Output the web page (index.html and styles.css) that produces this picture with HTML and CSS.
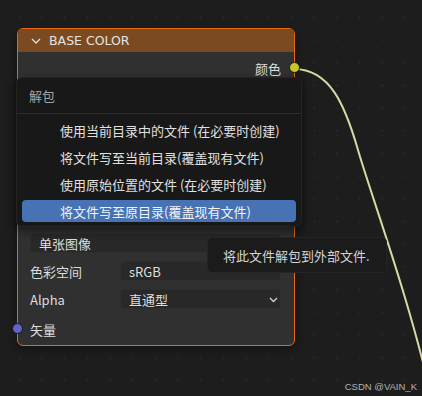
FILE: index.html
```html
<!DOCTYPE html>
<html lang="zh">
<head>
    <meta charset="UTF-8">
    <meta name="viewport" content="width=device-width, initial-scale=1.0">
    <title>Base Color</title>
    <link rel="stylesheet" href="styles.css">
</head>
<body>
    <div class="canvas">
        <svg class="wire" width="422" height="396" viewBox="0 0 422 396">
            <path d="M294 69 C 330 69, 345 105, 358 150 S 410 300, 432 400" fill="none" stroke="#d8d8a4" stroke-width="2"/>
        </svg>

        <div class="node">
            <div class="node-header">
                <svg class="chevron" width="10" height="6" viewBox="0 0 10 6">
                    <path d="M1 1 L5 5 L9 1" fill="none" stroke="#dcdcdc" stroke-width="1.3"/>
                </svg>
                BASE COLOR
            </div>
            <div class="output-row">颜色<span class="socket socket-color"></span></div>
            <div class="hidden-rows"></div>
            <div class="props">
                <div class="field wide">单张图像</div>
                <div class="prop-row">
                    <span class="label">色彩空间</span>
                    <div class="field">sRGB</div>
                </div>
                <div class="prop-row">
                    <span class="label">Alpha</span>
                    <div class="field">直通型
                        <svg class="drop" width="9" height="6" viewBox="0 0 9 6">
                            <path d="M1 1 L4.5 4.5 L8 1" fill="none" stroke="#cfcfcf" stroke-width="1.4"/>
                        </svg>
                    </div>
                </div>
                <div class="prop-row input-row">
                    <span class="socket socket-vector"></span>
                    <span class="label">矢量</span>
                </div>
            </div>
        </div>

        <div class="menu">
            <div class="menu-title">解包</div>
            <div class="menu-items">
                <div class="menu-item">使用当前目录中的文件 (在必要时创建)</div>
                <div class="menu-item">将文件写至当前目录(覆盖现有文件)</div>
                <div class="menu-item">使用原始位置的文件 (在必要时创建)</div>
                <div class="menu-item active">将文件写至原目录(覆盖现有文件)</div>
            </div>
        </div>

        <div class="tooltip">将此文件解包到外部文件.</div>

        <div class="watermark">CSDN @VAIN_K</div>
    </div>
</body>
</html>
```

FILE: styles.css
```css
body {
    margin: 0;
    padding: 0;
    background: #1d1d1d;
    font-family: "DejaVu Sans", "Noto Sans CJK SC", sans-serif;
    color: #e2e2e2;
}
.canvas {
    position: relative;
    width: 422px;
    height: 396px;
    overflow: hidden;
    background-color: #1d1d1d;
    background-image: radial-gradient(circle, #262626 1px, transparent 1.3px);
    background-size: 22.7px 22.7px;
    background-position: 8px 6px;
}
.wire {
    position: absolute;
    left: 0;
    top: 0;
}
.node {
    position: absolute;
    left: 17px;
    top: 28px;
    width: 278px;
    height: 318px;
    box-sizing: border-box;
    border: 1px solid #ea6610;
    border-radius: 6px;
    background: #303030;
    box-shadow: 0 3px 8px rgba(0, 0, 0, 0.4);
}
.node-header {
    height: 23px;
    display: flex;
    align-items: center;
    padding-left: 13px;
    background: #7b4a20;
    border-radius: 5px 5px 0 0;
    font-size: 12.5px;
    color: #e4e4e4;
}
.chevron {
    margin-right: 8px;
}
.output-row {
    position: relative;
    height: 32px;
    display: flex;
    align-items: center;
    justify-content: flex-end;
    padding-right: 13px;
    font-size: 13px;
    font-family: "Noto Sans CJK SC", sans-serif;
    color: #dcdcdc;
}
.socket {
    position: absolute;
    width: 9px;
    height: 9px;
    border-radius: 50%;
    border: 1px solid #151515;
}
.socket-color {
    right: -6px;
    top: 10px;
    background: #c7c729;
}
.socket-vector {
    left: -6px;
    top: 6px;
    background: #6363c7;
}
.hidden-rows {
    height: 149px;
}
.props {
    display: flex;
    flex-direction: column;
    gap: 8px;
    padding: 0 13px 0 12px;
    font-family: "Noto Sans CJK SC", sans-serif;
    font-size: 13px;
}
.prop-row {
    position: relative;
    display: flex;
    align-items: center;
    height: 20px;
}
.input-row {
    height: 24px;
    margin-left: -12px;
    padding-left: 12px;
}
.label {
    width: 90px;
    color: #dcdcdc;
}
.field {
    flex: 1;
    height: 20px;
    box-sizing: border-box;
    display: flex;
    align-items: center;
    padding-left: 8px;
    background: #282828;
    border: 1px solid #2e2e2e;
    border-radius: 4px;
    color: #dedede;
    position: relative;
}
.field.wide {
    flex: none;
}
.drop {
    position: absolute;
    right: 2px;
    top: 7px;
}
.menu {
    position: absolute;
    left: 16px;
    top: 77px;
    width: 286px;
    height: 150px;
    box-sizing: border-box;
    background: #181818;
    border: 1px solid #242424;
    border-radius: 6px;
    box-shadow: 0 4px 10px rgba(0, 0, 0, 0.5);
    font-family: "Noto Sans CJK SC", sans-serif;
    font-size: 13px;
}
.menu-title {
    height: 35px;
    display: flex;
    align-items: center;
    padding-left: 12px;
    color: #a6a6a6;
    border-bottom: 1px solid #2c2c2c;
}
.menu-items {
    display: flex;
    flex-direction: column;
    gap: 5px;
    padding: 5px 5px 0 5px;
}
.menu-item {
    height: 22px;
    display: flex;
    align-items: center;
    padding-left: 38px;
    border-radius: 4px;
    color: #e0e0e0;
}
.menu-item.active {
    background: #4772b3;
    color: #f2f2f2;
}
.tooltip {
    position: absolute;
    left: 207px;
    top: 237px;
    width: 180px;
    height: 36px;
    box-sizing: border-box;
    display: flex;
    align-items: center;
    padding-left: 15px;
    background: #1b1b1b;
    border: 1px solid #252525;
    border-radius: 5px;
    font-family: "Noto Sans CJK SC", sans-serif;
    font-size: 13px;
    color: #d4d4d4;
}
.watermark {
    position: absolute;
    right: 5px;
    bottom: 4px;
    font-family: "Liberation Sans", sans-serif;
    font-size: 9.5px;
    color: #b4b4b4;
}
```
